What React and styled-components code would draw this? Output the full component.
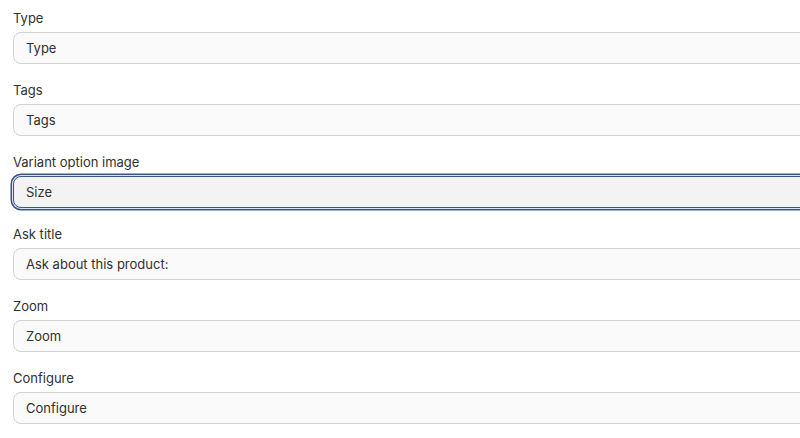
import React from "react";
import styled, { createGlobalStyle } from "styled-components";

const GlobalStyle = createGlobalStyle`
  html, body {
    margin: 0;
    padding: 0;
    background: #ffffff;
    overflow: hidden;
  }
  body {
    font-family: Inter, "Noto Sans", "Liberation Sans", sans-serif;
    color: #303030;
  }
`;

const fields = [
  { label: "Type", value: "Type" },
  { label: "Tags", value: "Tags" },
  { label: "Variant option image", value: "Size", focused: true },
  { label: "Ask title", value: "Ask about this product:" },
  { label: "Zoom", value: "Zoom" },
  { label: "Configure", value: "Configure" },
];

export default function App() {
  return (
    <>
      <GlobalStyle />
      <Form>
        {fields.map((f) => (
          <Field key={f.label}>
            <Label>{f.label}</Label>
            <TextInput $focused={f.focused}>{f.value}</TextInput>
          </Field>
        ))}
      </Form>
    </>
  );
}

const Form = styled.div`
  display: flex;
  flex-direction: column;
  gap: 16px;
  padding: 8px 0 8px 13px;
`;

const Field = styled.div`
  display: flex;
  flex-direction: column;
  gap: 4px;
`;

const Label = styled.div`
  font-size: 13px;
  line-height: 20px;
  color: #303030;
`;

const TextInput = styled.div`
  box-sizing: border-box;
  height: 32px;
  width: calc(100% + 24px);
  display: flex;
  align-items: center;
  padding: 0 12px;
  font-size: 13px;
  color: #303030;
  border-radius: 8px;
  background: ${(p) => (p.$focused ? "#f3f3f3" : "#fafafa")};
  border: 1px solid ${(p) => (p.$focused ? "#3a5689" : "#d2d2d2")};
  box-shadow: ${(p) =>
    p.$focused ? "0 0 0 1px #dde4f0, 0 0 0 2.5px #3a5689" : "none"};
`;
